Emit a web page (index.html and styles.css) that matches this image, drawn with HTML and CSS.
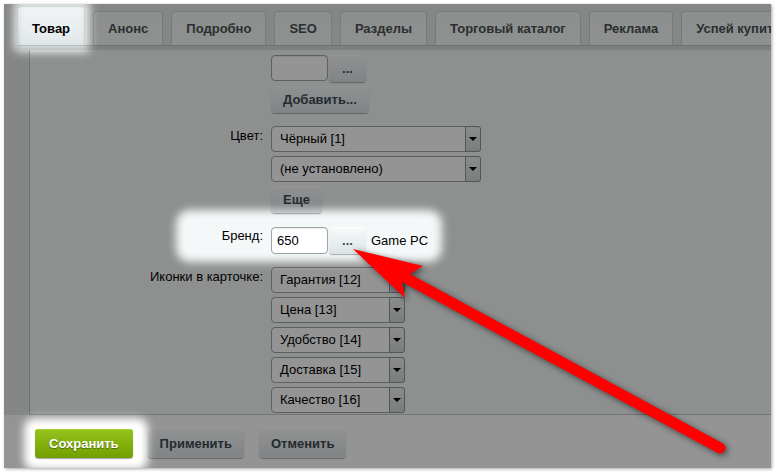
FILE: index.html
```html
<!DOCTYPE html>
<html lang="ru">
<head>
    <meta charset="UTF-8">
    <title>Товар - редактирование</title>
    <link rel="stylesheet" href="styles.css">
</head>
<body>
    <div class="page">
        <div class="shot">
            <div class="tabs">
                <div class="tab active">Товар</div>
                <div class="tab">Анонс</div>
                <div class="tab">Подробно</div>
                <div class="tab">SEO</div>
                <div class="tab">Разделы</div>
                <div class="tab">Торговый каталог</div>
                <div class="tab">Реклама</div>
                <div class="tab">Успей купить</div>
            </div>

            <div class="panel">
                <div class="panel-top"></div>
                <div class="panel-body">
                    <div class="form">
                        <div class="label"></div>
                        <div class="field">
                            <div class="line">
                                <input class="inp" type="text" value="">
                                <button class="btn dots">...</button>
                            </div>
                            <div><button class="btn">Добавить...</button></div>
                        </div>

                        <div class="label">Цвет:</div>
                        <div class="field">
                            <div class="select wide"><span>Чёрный [1]</span><i class="arr"></i></div>
                            <div class="select wide"><span>(не установлено)</span><i class="arr"></i></div>
                            <div><button class="btn">Еще</button></div>
                        </div>

                        <div class="label">Бренд:</div>
                        <div class="field">
                            <div class="line brand">
                                <input class="inp" type="text" value="650">
                                <button class="btn dots">...</button>
                                <span class="hint">Game PC</span>
                            </div>
                        </div>

                        <div class="label">Иконки в карточке:</div>
                        <div class="field">
                            <div class="select"><span>Гарантия [12]</span><i class="arr"></i></div>
                            <div class="select"><span>Цена [13]</span><i class="arr"></i></div>
                            <div class="select"><span>Удобство [14]</span><i class="arr"></i></div>
                            <div class="select"><span>Доставка [15]</span><i class="arr"></i></div>
                            <div class="select"><span>Качество [16]</span><i class="arr"></i></div>
                        </div>
                    </div>
                </div>
            </div>

            <div class="footer">
                <button class="btn save">Сохранить</button>
                <button class="btn big">Применить</button>
                <button class="btn big">Отменить</button>
            </div>

            <!-- dimming with spotlights, and the pointer arrow -->
            <svg class="overlay" width="767" height="464" viewBox="0 0 767 464">
                <defs>
                    <filter id="soft" x="-20%" y="-20%" width="140%" height="140%">
                        <feGaussianBlur stdDeviation="4"/>
                    </filter>
                    <mask id="holes">
                        <rect width="767" height="464" fill="#fff"/>
                        <g filter="url(#soft)" fill="#000">
                            <rect x="10" y="-4" width="76" height="52" rx="6"/>
                            <rect x="172" y="206" width="266" height="52" rx="14"/>
                            <rect x="20" y="414" width="124" height="52" rx="10"/>
                        </g>
                    </mask>
                </defs>
                <rect width="767" height="464" fill="#000" fill-opacity="0.42" mask="url(#holes)"/>
                <g class="arrow">
                    <line x1="402" y1="274" x2="716" y2="444" stroke="#fe0000" stroke-width="11" stroke-linecap="round"/>
                    <polygon points="349,245 419,262 406,270 398,278 401,294" fill="#fe0000"/>
                </g>
            </svg>
        </div>
    </div>
</body>
</html>
```

FILE: styles.css
```css
* {
    margin: 0;
    padding: 0;
    box-sizing: border-box;
}

body {
    font-family: 'Liberation Sans', Arial, sans-serif;
    font-size: 13px;
    color: #000;
    background: #fff;
}

.page {
    padding: 4px;
}

.shot {
    position: relative;
    width: 767px;
    height: 464px;
    overflow: hidden;
    background: #e6e9e9;
    box-shadow: 1px 1px 3px rgba(0, 0, 0, 0.35);
}

/* tabs */
.tabs {
    display: flex;
    align-items: flex-end;
    gap: 8px;
    height: 41px;
    padding-left: 13px;
    white-space: nowrap;
}

.tab {
    flex-shrink: 0;
    height: 34px;
    line-height: 33px;
    padding: 0 14px;
    border: 1px solid #cfd4d4;
    border-bottom: none;
    border-radius: 4px 4px 0 0;
    background: linear-gradient(#f3f6f6, #f6f9f9);
    font-weight: bold;
    color: #4a5254;
}

.tab.active {
    height: 39px;
    padding-top: 5px;
    background: linear-gradient(#f0f4f5, #e2e8ea);
    border-color: #d6dcdd;
    color: #000;
}

/* panel */
.panel {
    margin-left: 13px;
}

.panel-top {
    height: 5px;
    background: #d8dddd;
    border-top: 1px solid #bfc5c5;
}

.panel-body {
    height: 365px;
    margin-left: 12px;
    padding-top: 5px;
    background: #f5f8f8;
    border-left: 1px solid #bec3c3;
    border-bottom: 1px solid #c3c9c9;
    overflow: hidden;
}

.form {
    display: grid;
    grid-template-columns: 233px auto;
    column-gap: 8px;
    row-gap: 13px;
}

.label {
    text-align: right;
    padding-top: 2px;
    line-height: 16px;
}

.field {
    display: flex;
    flex-direction: column;
    gap: 4px;
}

.line {
    display: flex;
    align-items: flex-start;
}

.line.brand {
    height: 28px;
    align-items: center;
}

.inp {
    width: 57px;
    height: 26px;
    padding: 0 5px;
    border: 1px solid #9ea5a6;
    border-radius: 4px;
    background: #fff;
    font-family: inherit;
    font-size: 13px;
    color: #000;
    box-shadow: inset 0 1px 1px rgba(0, 0, 0, 0.08);
}

.line.brand .inp {
    height: 27px;
}

.btn {
    height: 27px;
    padding: 0 12px;
    border: none;
    border-radius: 4px;
    background: linear-gradient(#f8fafb, #dde4e6);
    box-shadow: 0 1px 1px rgba(0, 0, 0, 0.3), inset 0 1px 0 #fff;
    font-family: inherit;
    font-size: 13px;
    font-weight: bold;
    color: #3f4b54;
}

.btn.dots {
    width: 37px;
    margin-left: 1px;
    padding: 0;
}

.hint {
    margin-left: 5px;
}

.select {
    display: flex;
    width: 134px;
    height: 26px;
    border: 1px solid #9ea5a6;
    border-radius: 4px;
    background: #fff;
}

.select.wide {
    width: 210px;
}

.select span {
    flex: 1;
    padding-left: 8px;
    line-height: 24px;
    white-space: nowrap;
    overflow: hidden;
}

.arr {
    position: relative;
    width: 16px;
    border: 1px solid #8d9596;
    border-radius: 0 3px 3px 0;
    margin: -1px -1px -1px 0;
    background: linear-gradient(#eef1f2, #d2d8d9);
}

.arr::after {
    content: '';
    position: absolute;
    left: 3px;
    top: 10px;
    border-left: 4px solid transparent;
    border-right: 4px solid transparent;
    border-top: 4px solid #000;
}

/* footer */
.footer {
    display: flex;
    gap: 15px;
    height: 53px;
    padding: 14px 0 0 31px;
    background: #fff;
}

.btn.big {
    height: 29px;
    padding: 0 12px;
}

.btn.save {
    height: 29px;
    padding: 0 14px;
    border-radius: 3px;
    background: linear-gradient(#96c21c, #70a000);
    box-shadow: 0 1px 1px rgba(0, 0, 0, 0.35), inset 0 1px 0 #a9d33a;
    color: #fff;
    text-shadow: 0 1px 1px rgba(0, 0, 0, 0.4);
}

.overlay {
    position: absolute;
    left: 0;
    top: 0;
}

.arrow {
    filter: drop-shadow(2px 2px 3px rgba(0, 0, 0, 0.55));
}
```
